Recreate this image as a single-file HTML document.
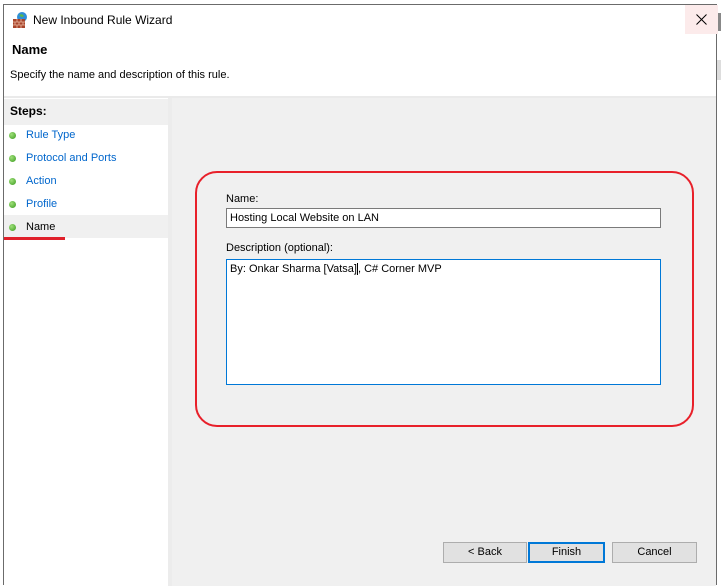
<!DOCTYPE html>
<html><head><meta charset="utf-8"><style>
*{margin:0;padding:0;box-sizing:border-box}
body{width:721px;height:585px;background:#fff;position:relative;overflow:hidden;font-family:"Liberation Sans",sans-serif;font-size:11px;color:#000}
.win{position:absolute;left:3px;top:4px;width:714px;height:581px;border:1px solid #6b6b6b;border-bottom:none;background:#fff}
.abs{position:absolute}
.right{position:absolute;left:717px;top:0;width:4px;height:585px;background:#fff}
.step{position:absolute;left:22px;color:#0066cc;font-size:11px}
.dot{position:absolute;left:5px;width:7px;height:7px;border-radius:50%;background:radial-gradient(circle at 35% 35%,#9fe07a,#3a9a1e)}
.btn{position:absolute;top:537px;height:21px;border:1px solid #adadad;background:#e1e1e1;text-align:center;line-height:19px;font-size:11px}
</style></head><body>
<div class="right"><div style="position:absolute;left:0;top:13px;width:4px;height:18px;background:#888"></div><div style="position:absolute;left:0;top:60px;width:4px;height:20px;background:#ddd"></div></div>
<div class="win">
 <svg class="abs" style="left:8px;top:6px" width="18" height="18" viewBox="0 0 18 18">
  <circle cx="10" cy="6" r="5" fill="#2f8ed8"/><path d="M7 4q3-2 5 1q-2 2-4 0z" fill="#5cb84a"/>
  <rect x="1" y="8" width="12" height="9" fill="#a8442b"/>
  <path d="M1 11h12M1 14h12M5 8v3M9 8v3M3 11v3M7 11v3M11 11v3M5 14v3M9 14v3" stroke="#e9b7a0" stroke-width="0.8"/>
 </svg>
 <div class="abs" style="left:29px;top:8px;font-size:12px">New Inbound Rule Wizard</div>
 <div class="abs" style="left:681px;top:0;width:33px;height:29px;background:#fcebeb"></div>
 <svg class="abs" style="left:692px;top:9px" width="11" height="11"><path d="M0.5 0.5L10.5 10.5M10.5 0.5L0.5 10.5" stroke="#000" stroke-width="1"/></svg>
 <div class="abs" style="left:8px;top:37px;font-size:13px;font-weight:bold">Name</div>
 <div class="abs" style="left:6px;top:64px">Specify the name and description of this rule.</div>
 <div class="abs" style="left:0;top:91px;width:712px;height:2px;background:#eaeaea"></div>
 <div class="abs" style="left:0;top:93px;width:167px;height:488px;background:#fff"></div>
 <div class="abs" style="left:164px;top:93px;width:4px;height:488px;background:#ececec"></div>
 <div class="abs" style="left:0;top:94px;width:164px;height:26px;background:#f0f0f0"></div>
 <div class="abs" style="left:6px;top:99px;font-weight:bold;font-size:12px">Steps:</div>
 <div class="dot" style="top:127px"></div><div class="step" style="top:124px">Rule Type</div>
 <div class="dot" style="top:150px"></div><div class="step" style="top:147px">Protocol and Ports</div>
 <div class="dot" style="top:173px"></div><div class="step" style="top:170px">Action</div>
 <div class="dot" style="top:196px"></div><div class="step" style="top:193px">Profile</div>
 <div class="abs" style="left:0;top:210px;width:164px;height:23px;background:#f0f0f0"></div>
 <div class="dot" style="top:219px"></div><div class="step" style="top:216px;color:#000">Name</div>
 <div class="abs" style="left:0;top:232px;width:61px;height:3px;background:#e0202a"></div>
 <div class="abs" style="left:168px;top:93px;width:544px;height:488px;background:#f0f0f0"></div>
 <div class="abs" style="left:191px;top:166px;width:499px;height:256px;border:2.5px solid #e8202a;border-radius:22px"></div>
 <div class="abs" style="left:222px;top:188px">Name:</div>
 <div class="abs" style="left:222px;top:203px;width:435px;height:20px;border:1px solid #7a7a7a;background:#fff;padding:3px 0 0 3px">Hosting Local Website on LAN</div>
 <div class="abs" style="left:222px;top:237px">Description (optional):</div>
 <div class="abs" style="left:222px;top:254px;width:435px;height:126px;border:1px solid #0078d7;background:#fff;padding:3px 0 0 3px">By: Onkar Sharma [Vatsa]<span style="border-left:1px solid #000"></span>, C# Corner MVP</div>
 <div class="btn" style="left:439px;width:84px">&lt; Back</div>
 <div class="btn" style="left:524px;width:77px;border:2px solid #0078d7;line-height:17px">Finish</div>
 <div class="btn" style="left:608px;width:85px">Cancel</div>
</div>
</body></html>
